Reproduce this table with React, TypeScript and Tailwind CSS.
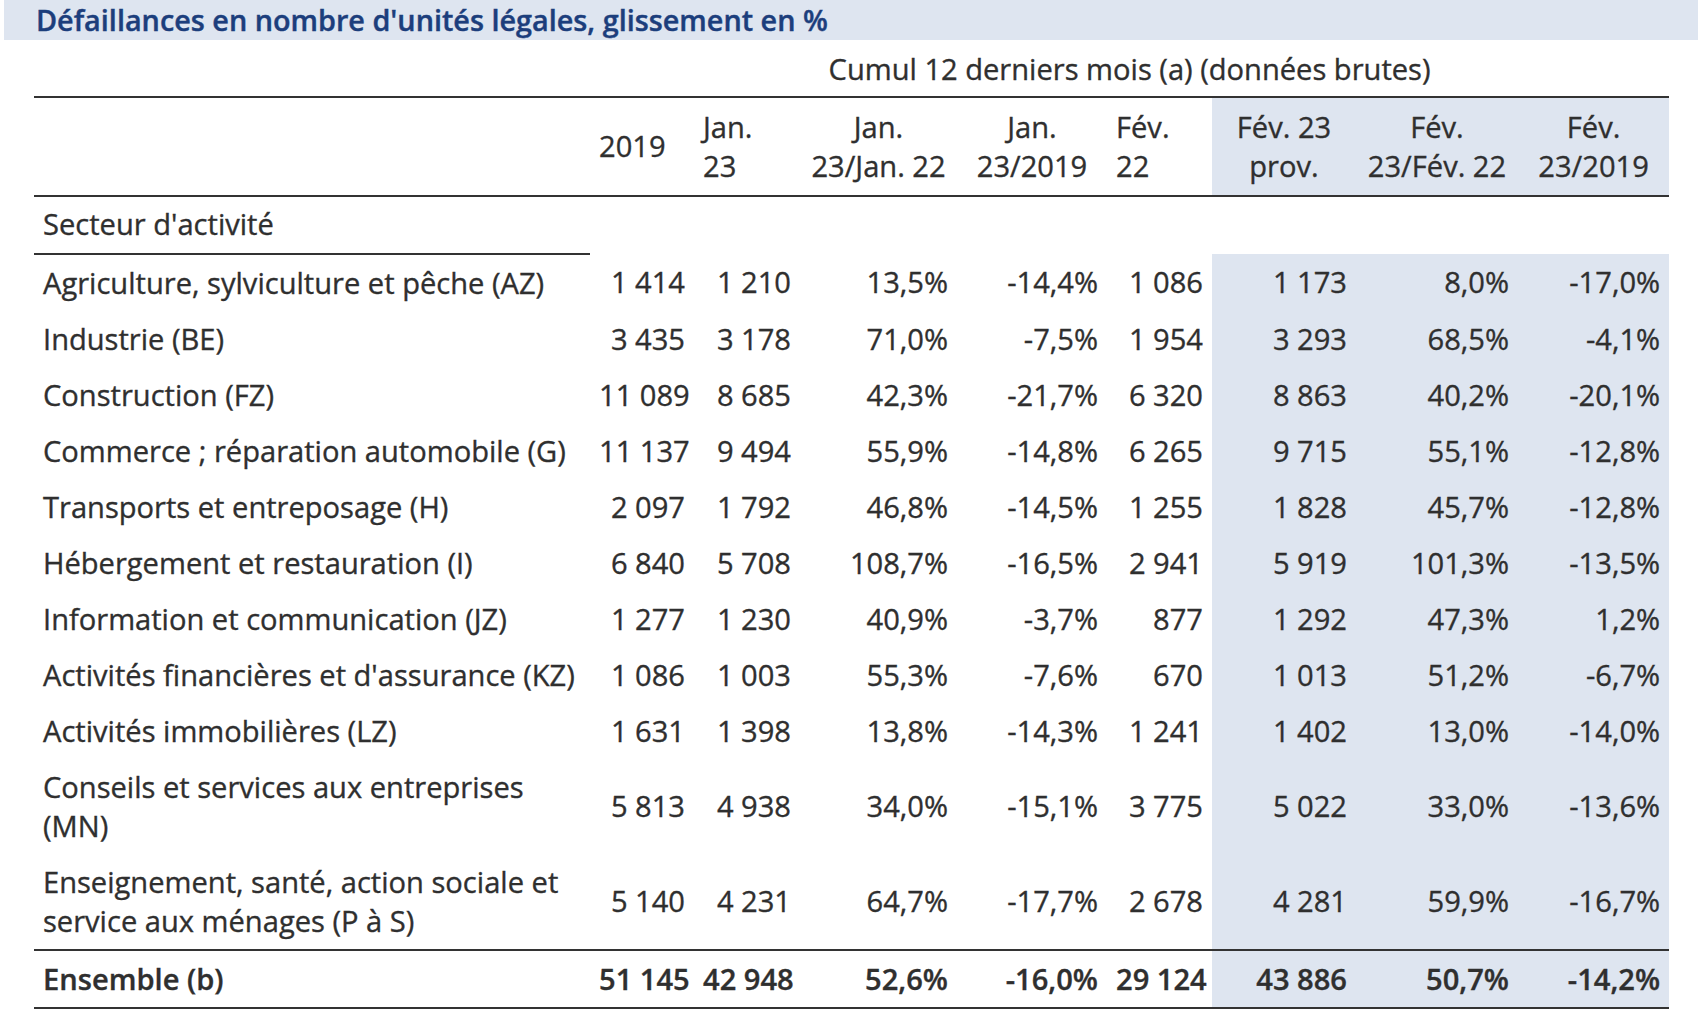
const rows: { label: React.ReactNode; values: string[] }[] = [
  { label: 'Agriculture, sylviculture et pêche (AZ)', values: ['1 414', '1 210', '13,5%', '-14,4%', '1 086', '1 173', '8,0%', '-17,0%'] },
  { label: 'Industrie (BE)', values: ['3 435', '3 178', '71,0%', '-7,5%', '1 954', '3 293', '68,5%', '-4,1%'] },
  { label: 'Construction (FZ)', values: ['11 089', '8 685', '42,3%', '-21,7%', '6 320', '8 863', '40,2%', '-20,1%'] },
  { label: 'Commerce ; réparation automobile (G)', values: ['11 137', '9 494', '55,9%', '-14,8%', '6 265', '9 715', '55,1%', '-12,8%'] },
  { label: 'Transports et entreposage (H)', values: ['2 097', '1 792', '46,8%', '-14,5%', '1 255', '1 828', '45,7%', '-12,8%'] },
  { label: 'Hébergement et restauration (I)', values: ['6 840', '5 708', '108,7%', '-16,5%', '2 941', '5 919', '101,3%', '-13,5%'] },
  { label: 'Information et communication (JZ)', values: ['1 277', '1 230', '40,9%', '-3,7%', '877', '1 292', '47,3%', '1,2%'] },
  { label: "Activités financières et d'assurance (KZ)", values: ['1 086', '1 003', '55,3%', '-7,6%', '670', '1 013', '51,2%', '-6,7%'] },
  { label: 'Activités immobilières (LZ)', values: ['1 631', '1 398', '13,8%', '-14,3%', '1 241', '1 402', '13,0%', '-14,0%'] },
  {
    label: (
      <>
        Conseils et services aux entreprises
        <br />
        (MN)
      </>
    ),
    values: ['5 813', '4 938', '34,0%', '-15,1%', '3 775', '5 022', '33,0%', '-13,6%'],
  },
  {
    label: (
      <>
        Enseignement, santé, action sociale et
        <br />
        service aux ménages (P à S)
      </>
    ),
    values: ['5 140', '4 231', '64,7%', '-17,7%', '2 678', '4 281', '59,9%', '-16,7%'],
  },
]

const total = ['51 145', '42 948', '52,6%', '-16,0%', '29 124', '43 886', '50,7%', '-14,2%']

// numbers use no-break spaces so they never wrap
const nb = (s: string) => s.replace(/ /g, '\u00a0')

const shade = 'bg-[#dee5f0]'

function Cells({ values }: { values: string[] }) {
  return (
    <>
      {values.map((v, i) => (
        <td
          key={i}
          className={`px-[9px] py-[8.5px] text-right align-middle ${i >= 5 ? shade : ''}`}
        >
          {nb(v)}
        </td>
      ))}
    </>
  )
}

export default function App() {
  return (
    <div className="min-h-screen bg-white font-['Open_Sans',sans-serif] text-[#2f2f2f]">
      {/* Title bar */}
      <div className="ml-[4px] h-[40px] bg-[#dee5f0] pl-[32px] text-[28.8px] font-semibold leading-[40px] text-[#1c3e7c] [-webkit-text-stroke:0.4px_#1c3e7c]">
        Défaillances en nombre d'unités légales, glissement en %
      </div>

      <table className="ml-[34px] w-[1635px] table-fixed border-collapse text-[29.1px] leading-[39px] [-webkit-text-stroke:0.35px_#2f2f2f]">
        <colgroup>
          <col className="w-[556px]" />
          <col className="w-[104px]" />
          <col className="w-[106px]" />
          <col className="w-[157px]" />
          <col className="w-[150px]" />
          <col className="w-[105px]" />
          <col className="w-[144px]" />
          <col className="w-[162px]" />
          <col className="w-[151px]" />
        </colgroup>
        <thead>
          <tr>
            <th className="pt-[10px] pb-[7px]" />
            <th colSpan={8} className="pt-[10px] pb-[7px] text-center font-normal">
              Cumul 12 derniers mois (a) (données brutes)
            </th>
          </tr>
          <tr className="border-y-2 border-[#333]">
            <th className="px-[9px] py-[9.5px]" />
            <th className="px-[9px] py-[9.5px] text-left align-middle font-normal">2019</th>
            <th className="px-[9px] py-[9.5px] text-left align-middle font-normal">
              Jan.
              <br />
              23
            </th>
            <th className="px-[9px] py-[9.5px] text-center align-middle font-normal">
              Jan.
              <br />
              23/Jan. 22
            </th>
            <th className="px-[9px] py-[9.5px] text-center align-middle font-normal">
              Jan.
              <br />
              23/2019
            </th>
            <th className="px-[9px] py-[9.5px] text-left align-middle font-normal">
              Fév.
              <br />
              22
            </th>
            <th className={`px-[9px] py-[9.5px] text-center align-middle font-normal ${shade}`}>
              Fév. 23
              <br />
              prov.
            </th>
            <th className={`px-[9px] py-[9.5px] text-center align-middle font-normal ${shade}`}>
              Fév.
              <br />
              23/Fév. 22
            </th>
            <th className={`px-[9px] py-[9.5px] text-center align-middle font-normal ${shade}`}>
              Fév.
              <br />
              23/2019
            </th>
          </tr>
        </thead>
        <tbody>
          <tr>
            <td className="border-b-2 border-[#333] px-[9px] pt-[8px] pb-[9px] text-left">Secteur d'activité</td>
            <td colSpan={8} />
          </tr>
          {rows.map((r, i) => (
            <tr key={i} className={i === rows.length - 1 ? 'border-b-2 border-[#333]' : ''}>
              <td className="px-[9px] py-[8.5px] text-left align-middle">{r.label}</td>
              <Cells values={r.values} />
            </tr>
          ))}
          <tr className="border-b-2 border-[#333] font-semibold">
            <td className="px-[9px] py-[8.5px] text-left align-middle">Ensemble (b)</td>
            <Cells values={total} />
          </tr>
        </tbody>
      </table>
    </div>
  )
}
